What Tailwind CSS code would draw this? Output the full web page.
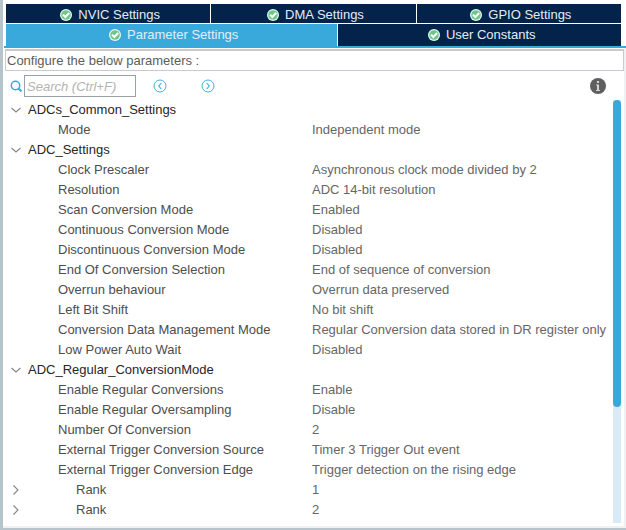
<!DOCTYPE html>
<html lang="en">
<head>
<meta charset="utf-8">
<title>ADC Configuration</title>
<script src="https://cdn.jsdelivr.net/npm/@tailwindcss/browser@4"></script>
</head>
<body class="bg-white">
<svg class="hidden">
  <symbol id="ok" viewBox="0 0 12 12"><circle cx="6" cy="6" r="6" fill="#e9fbee"/><circle cx="6" cy="6" r="4.8" fill="#6cc78a"/><path d="M3 5.600 5.300 8 9.200 4" fill="none" stroke="#fff" stroke-width="2"/></symbol>
  <symbol id="down" viewBox="0 0 10 10"><path d="M.5 3 5 7 9.500 3" fill="none" stroke="#858585" stroke-width="1.100"/></symbol>
  <symbol id="right" viewBox="0 0 10 10"><path d="M2.500 .5 7 5 2.500 9.500" fill="none" stroke="#858585" stroke-width="1.100"/></symbol>
</svg>
<div class="flex min-h-screen flex-col border-b-2 border-l-3 border-[#b8c4cb] bg-white pt-1 font-['Liberation_Sans',Arial,sans-serif] text-[13px] text-[#4d4d4d]">
  <nav role="tablist" class="ml-px border-b-2 border-[#39a9dc] text-[#e3edf5]">
    <div class="mr-[5px] ml-0.5 grid grid-cols-3 gap-px">
      <button role="tab" class="flex h-[19px] items-center justify-center gap-1.5 bg-[#03234b] pt-0.5 pl-1 leading-4"><svg class="size-3"><use href="#ok"/></svg>NVIC Settings</button>
      <button role="tab" class="flex h-[19px] items-center justify-center gap-1.5 bg-[#03234b] pt-0.5 pl-1 leading-4"><svg class="size-3"><use href="#ok"/></svg>DMA Settings</button>
      <button role="tab" class="flex h-[19px] items-center justify-center gap-1.5 bg-[#03234b] pt-0.5 pl-1 leading-4"><svg class="size-3"><use href="#ok"/></svg>GPIO Settings</button>
    </div>
    <div class="mt-px mr-[5px] ml-0.5 grid grid-cols-[332fr_283fr] gap-px">
      <button role="tab" aria-selected="true" class="flex h-[22px] items-center justify-center gap-1.5 bg-[#39a9dc] pl-1 leading-4"><svg class="size-3"><use href="#ok"/></svg>Parameter Settings</button>
      <button role="tab" class="flex h-[22px] items-center justify-center gap-1.5 bg-[#03234b] pl-1 leading-4"><svg class="size-3"><use href="#ok"/></svg>User Constants</button>
    </div>
  </nav>
  <main class="flex flex-1 flex-col border-r-2 border-b-2 border-[#f0f1f3] pt-px pb-px">
    <p class="ml-0.5 h-[22px] border border-t-2 border-[#c8cacf] px-px leading-5 text-[#5c5c5c]">Configure the below parameters :</p>
    <div class="mt-1 flex h-[22px] items-center pr-[18px] pl-[7px]">
      <label for="search" class="mr-0.5"><svg aria-label="Search" class="size-3" viewBox="0 0 12 12" fill="none" stroke="#39a9dc" stroke-width="1.500"><circle cx="5.500" cy="5.500" r="4.200"/><path d="M8.500 8.500 11.500 11.500" stroke-width="2"/></svg></label>
      <input id="search" type="text" placeholder="Search (Ctrl+F)" class="h-[22px] w-28 border border-[#9a9faa] px-0.5 italic outline-none placeholder:text-[#b3b3b3]">
      <button aria-label="Previous match" class="ml-[17px]"><svg class="size-3.5" viewBox="0 0 14 14" fill="none" stroke="#45afe0"><circle cx="7" cy="7" r="6"/><path d="M8.200 4 5.800 7 8.200 10" stroke-width="1.200"/></svg></button>
      <button aria-label="Next match" class="ml-[34px]"><svg class="size-3.5" viewBox="0 0 14 14" fill="none" stroke="#45afe0"><circle cx="7" cy="7" r="6"/><path d="M5.800 4 8.200 7 5.800 10" stroke-width="1.200"/></svg></button>
      <button aria-label="Information" class="ml-auto"><svg class="size-4" viewBox="0 0 16 16"><circle cx="8" cy="8" r="8" fill="#5f5f5f"/><path d="M7 3h2v2H7zM6 6.500h3V12h1v1H6v-1h1V7.500H6z" fill="#d4d4d4"/></svg></button>
    </div>
    <div class="mt-[3px] flex flex-1 items-stretch pr-[3px] pl-2">
      <div class="min-w-0 flex-1">
      <table id="params" class="w-full table-fixed border-collapse text-left leading-5 whitespace-nowrap [&_td]:p-0 [&_td]:text-[#666] [&_th]:p-0 [&_th]:font-normal [&_tr]:h-5">
        <colgroup><col class="w-[47px]"><col class="w-[254px]"><col></colgroup>
        <tbody>
          <tr><th colspan="3"><button aria-expanded="true" class="flex items-center gap-[7px] text-[#262626]"><svg class="size-2.5"><use href="#down"/></svg>ADCs_Common_Settings</button></th></tr>
          <tr><td></td><th>Mode</th><td>Independent mode</td></tr>
          <tr><th colspan="3"><button aria-expanded="true" class="flex items-center gap-[7px] text-[#262626]"><svg class="size-2.5"><use href="#down"/></svg>ADC_Settings</button></th></tr>
          <tr><td></td><th>Clock Prescaler</th><td>Asynchronous clock mode divided by 2</td></tr>
          <tr><td></td><th>Resolution</th><td>ADC 14-bit resolution</td></tr>
          <tr><td></td><th>Scan Conversion Mode</th><td>Enabled</td></tr>
          <tr><td></td><th>Continuous Conversion Mode</th><td>Disabled</td></tr>
          <tr><td></td><th>Discontinuous Conversion Mode</th><td>Disabled</td></tr>
          <tr><td></td><th>End Of Conversion Selection</th><td>End of sequence of conversion</td></tr>
          <tr><td></td><th>Overrun behaviour</th><td>Overrun data preserved</td></tr>
          <tr><td></td><th>Left Bit Shift</th><td>No bit shift</td></tr>
          <tr><td></td><th>Conversion Data Management Mode</th><td>Regular Conversion data stored in DR register only</td></tr>
          <tr><td></td><th>Low Power Auto Wait</th><td>Disabled</td></tr>
          <tr><th colspan="3"><button aria-expanded="true" class="flex items-center gap-[7px] text-[#262626]"><svg class="size-2.5"><use href="#down"/></svg>ADC_Regular_ConversionMode</button></th></tr>
          <tr><td></td><th>Enable Regular Conversions</th><td>Enable</td></tr>
          <tr><td></td><th>Enable Regular Oversampling</th><td>Disable</td></tr>
          <tr><td></td><th>Number Of Conversion</th><td>2</td></tr>
          <tr><td></td><th>External Trigger Conversion Source</th><td>Timer 3 Trigger Out event</td></tr>
          <tr><td></td><th>External Trigger Conversion Edge</th><td>Trigger detection on the rising edge</td></tr>
          <tr><td><button aria-label="Expand rank 1" aria-expanded="false" class="block"><svg class="size-2.5"><use href="#right"/></svg></button></td><th><span class="pl-[18px]">Rank</span></th><td>1</td></tr>
          <tr><td><button aria-label="Expand rank 2" aria-expanded="false" class="block"><svg class="size-2.5"><use href="#right"/></svg></button></td><th><span class="pl-[18px]">Rank</span></th><td>2</td></tr>
        </tbody>
      </table>
      </div>
      <div role="scrollbar" aria-label="Parameters" aria-controls="params" aria-valuenow="0" class="mb-0.5 flex w-2 flex-col bg-[#d9eaf6]"><div class="flex-[307] rounded-full bg-[#39a9dc]"></div><div class="flex-[116]"></div></div>
    </div>
  </main>
</div>
</body>
</html>
